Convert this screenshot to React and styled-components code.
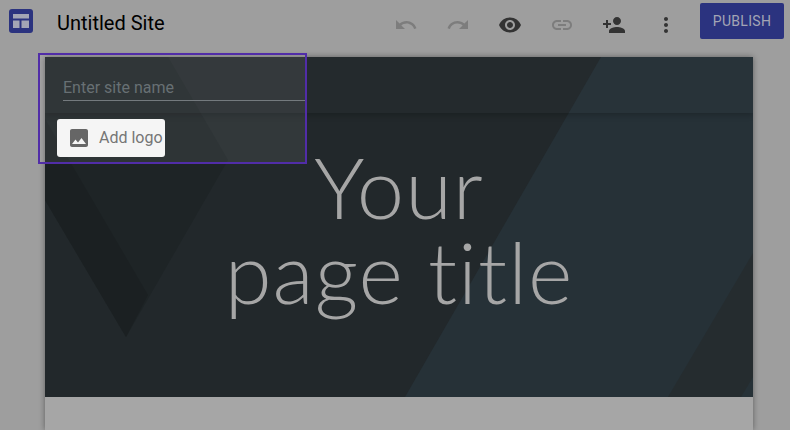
import React from 'react';
import styled, { createGlobalStyle } from 'styled-components';
import { MdUndo, MdRedo, MdVisibility, MdLink, MdPersonAdd, MdMoreVert, MdImage } from 'react-icons/md';

const Global = createGlobalStyle`
  html, body { margin: 0; padding: 0; height: 100%; overflow: hidden; background: #9e9e9e; }
  body { font-family: Roboto, "Liberation Sans", sans-serif; }
`;

const Shell = styled.div`
  width: 790px;
  height: 430px;
  overflow: hidden;
  display: flex;
  flex-direction: column;
  background: #9e9e9e;
`;

const Toolbar = styled.header`
  height: 57px;
  flex: none;
  display: flex;
  align-items: flex-start;
  padding: 3px 6px 0 9px;
  box-sizing: border-box;
`;

const Logo = styled.svg`
  width: 24px;
  height: 24px;
  margin-top: 6px;
  flex: none;
`;

const SiteTitle = styled.h1`
  margin: 6px 0 0 24px;
  font: 400 20px/28px Roboto, sans-serif;
  color: #000;
  flex: 1;
`;

const Actions = styled.div`
  display: flex;
  align-items: center;
  height: 44px;
  margin-right: 8px;
`;

const IconSlot = styled.span`
  width: 52px;
  height: 44px;
  display: flex;
  align-items: center;
  justify-content: center;
  color: ${p => (p.$active ? '#333333' : '#7d7d7d')};
  font-size: 24px;
`;

const Publish = styled.button`
  width: 84px;
  height: 36px;
  border: 0;
  border-radius: 2px;
  background: #2b337f;
  color: #a3a5b5;
  font: 400 14px/36px Roboto, sans-serif;
  letter-spacing: 0.3px;
  padding: 0;
`;

const Stage = styled.main`
  flex: 1;
  display: flex;
  justify-content: flex-start;
  padding-left: 45px;
`;

const Page = styled.section`
  width: 708px;
  height: 373px;
  flex: none;
  background: #a6a6a6;
  box-shadow: 0 0 6px rgba(0, 0, 0, 0.4);
`;

const Hero = styled.div`
  position: relative;
  height: 340px;
  background: #22282b;
  overflow: hidden;
`;

const Art = styled.svg`
  position: absolute;
  inset: 0;
  width: 708px;
  height: 340px;
`;

const SiteBand = styled.div`
  position: relative;
  height: 56px;
  box-sizing: border-box;
  padding: 18px 0 0 18px;
  background: rgba(255, 255, 255, 0.012);
  box-shadow: 0 2px 6px rgba(0, 0, 0, 0.22);
`;

const NameInput = styled.div`
  width: 242px;
  height: 26px;
  box-sizing: border-box;
  border-bottom: 1px solid #697074;
  color: #5c6569;
  font: 400 16px/26px Roboto, sans-serif;
`;

const LogoButton = styled.button`
  position: relative;
  z-index: 2;
  display: flex;
  align-items: center;
  gap: 8px;
  width: 108px;
  height: 38px;
  margin: 6px 0 0 12px;
  padding: 0 0 0 10px;
  box-sizing: border-box;
  border: 0;
  border-radius: 3px;
  background: #f5f5f5;
  color: #757575;
  font: 400 16px/38px Roboto, sans-serif;
  svg { flex: none; color: #666; }
`;

const PageTitle = styled.h2`
  position: relative;
  margin: -13px 0 0;
  text-align: center;
  font: 300 85px/85px Lato, sans-serif;
  color: #a6a6a6;
  letter-spacing: 1px;
`;

const Selection = styled.div`
  position: absolute;
  left: 38px;
  top: 53px;
  width: 269px;
  height: 111px;
  box-sizing: border-box;
  border: 2px solid #512da8;
  background: rgba(255, 255, 255, 0.075);
  pointer-events: none;
`;

export default function App() {
  return (
    <Shell>
      <Global />
      <Toolbar>
        <Logo viewBox="0 0 24 24">
          <rect width="24" height="24" rx="3" fill="#2b337f" />
          <path d="M4 5h16v4.5H4zM4 11.5h6.5V19H4zM12.500 11.500H20V19h-7.500z" fill="#a3a5b5" />
        </Logo>
        <SiteTitle>Untitled Site</SiteTitle>
        <Actions>
          <IconSlot><MdUndo /></IconSlot>
          <IconSlot><MdRedo /></IconSlot>
          <IconSlot $active><MdVisibility /></IconSlot>
          <IconSlot><MdLink /></IconSlot>
          <IconSlot $active><MdPersonAdd /></IconSlot>
          <IconSlot $active><MdMoreVert /></IconSlot>
        </Actions>
        <Publish>PUBLISH</Publish>
      </Toolbar>
      <Stage>
        <Page>
          <Hero>
            <Art viewBox="0 0 708 340">
              <polygon points="556,0 708,0 708,340 360,340" fill="#263137" />
              <polygon points="708,196 623,340 696,340 708,320" fill="#252c2f" />
              <polygon points="0,0 123,0 183,103 81,280 0,143" fill="#1e2426" />
              <polygon points="0,62 103,238 81,280 0,143" fill="#1b2022" />
            </Art>
            <SiteBand>
              <NameInput>Enter site name</NameInput>
            </SiteBand>
            <LogoButton><MdImage size={24} />Add logo</LogoButton>
            <PageTitle>Your<br />page title</PageTitle>
          </Hero>
        </Page>
      </Stage>
      <Selection />
    </Shell>
  );
}
